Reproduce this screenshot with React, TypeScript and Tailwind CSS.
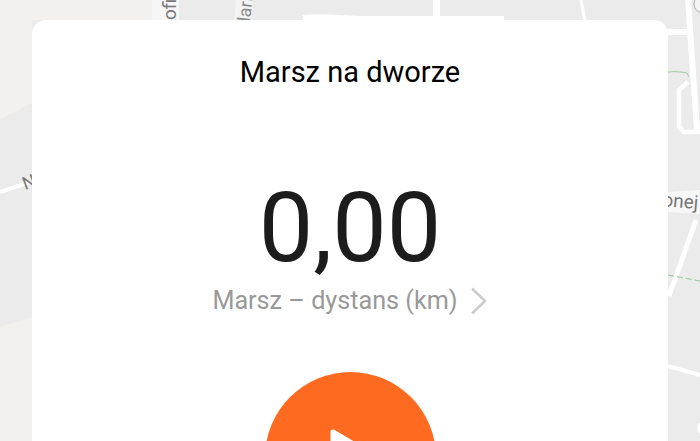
import React from "react";

function MapBackground() {
  return (
    <svg className="absolute inset-0" width="700" height="441" viewBox="0 0 700 441">
      <rect width="700" height="441" fill="#ebebeb" />
      <path d="M0 0H152V20H32V103C22 108 10 114 0 120Z" fill="#f2f1ef" />
      <path d="M0 327L32 317V441H0Z" fill="#f1f0ef" />
      <rect x="152" y="0" width="27" height="22" fill="#f6f6f6" />
      <path d="M236 0H253L251 22H234Z" fill="#f4f4f4" />
      <rect x="433" y="0" width="7" height="16" fill="#ffffff" />
      <path d="M303 15C320 13 340 15 360 16H504V22H303Z" fill="#ffffff" />
      <path d="M581 0L585 21" stroke="#ffffff" strokeWidth="3" fill="none" />
      <path d="M0 192L30 182" stroke="#ffffff" strokeWidth="4" fill="none" />
      <path d="M668 32H690" stroke="#ffffff" strokeWidth="6" fill="none" />
      <path d="M688 0L697 130" stroke="#ffffff" strokeWidth="6" fill="none" />
      <path d="M688 82L679 90V127L684 132H700" stroke="#ffffff" strokeWidth="4.5" fill="none" />
      <path d="M668 72C675 71 682 72 687 73L689 77" stroke="#9fcf9f" strokeWidth="1" fill="none" />
      <circle cx="703" cy="4" r="9" fill="#f4f4f4" stroke="#aaaaaa" strokeWidth="1" />
      <path d="M696 220L669 296" stroke="#ffffff" strokeWidth="5" fill="none" />
      <path d="M668 366L700 375" stroke="#ffffff" strokeWidth="4" fill="none" />
      <path d="M668 275L700 281" stroke="#8fc79a" strokeWidth="1" strokeDasharray="6 3" fill="none" />
      <path d="M668 192L700 190V214L668 212Z" fill="#f7f7f7" />
      <circle cx="703" cy="428" r="6" fill="#ffffff" />
      <text transform="translate(176 20) rotate(-90)" fontFamily="Roboto, sans-serif" fontSize="19" fill="#777777">ofi</text>
      <text transform="translate(250 22) rotate(-84)" fontFamily="Roboto, sans-serif" fontSize="18" fill="#8a8a8a">lari</text>
      <text transform="translate(25 190) rotate(-20)" fontFamily="Roboto, sans-serif" fontSize="18" fill="#777777">N</text>
      <text transform="translate(662 206) rotate(5)" fontFamily="Roboto, sans-serif" fontSize="19" fill="#777777">onej</text>
    </svg>
  );
}

export default function App() {
  return (
    <div className="relative h-[441px] w-[700px] overflow-hidden font-['Roboto',sans-serif]">
      <MapBackground />
      <div className="relative mx-[32px] mt-[20px] flex h-[500px] flex-col items-center rounded-t-[14px] bg-white">
        <h1 className="mt-[33px] text-[29px] leading-[38px] font-normal text-black">Marsz na dworze</h1>
        <div className="mt-[80px] text-[97px] leading-[114px] font-normal text-[#1c1c1c]">0,00</div>
        <div className="-mt-[2px] flex items-center gap-[12px]">
          <span className="text-[25.2px] leading-[36px] text-[#999999]">Marsz – dystans (km)</span>
          <svg width="18" height="28" viewBox="0 0 18 28" fill="none">
            <path d="M2 1.5L15 14L2 26.5" stroke="#cccccc" strokeWidth="2.6" />
          </svg>
        </div>
        <button className="mt-[53px] flex h-[171px] w-[171px] shrink-0 items-start justify-center rounded-full bg-[#ff6a21] pt-[56px] pl-[8px]">
          <svg width="48" height="56" viewBox="0 0 48 56">
            <path d="M3 4L44 28L3 52Z" fill="#ffffff" stroke="#ffffff" strokeWidth="5" strokeLinejoin="round" />
          </svg>
        </button>
      </div>
    </div>
  );
}
